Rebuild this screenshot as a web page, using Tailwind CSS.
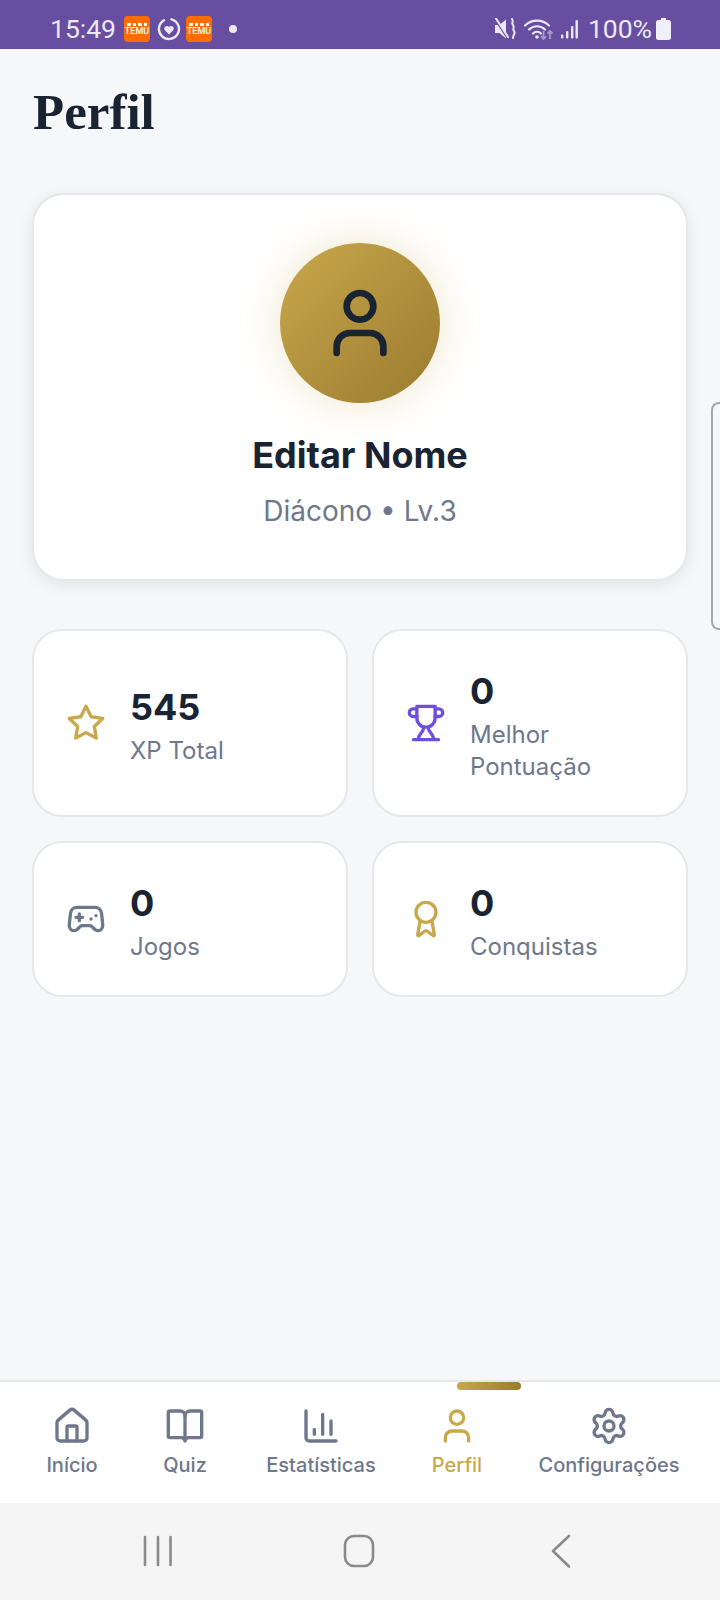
<!DOCTYPE html>
<html lang="pt-BR">
<head>
  <meta charset="UTF-8" />
  <meta name="viewport" content="width=device-width, initial-scale=1.0" />
  <title>Perfil</title>
  <script src="https://cdn.jsdelivr.net/npm/@tailwindcss/browser@4"></script>
</head>
<body class="relative w-[720px] h-[1600px] overflow-hidden flex flex-col bg-[#f6f7f9] font-['Inter',sans-serif]">

  <!-- status bar -->
  <div class="h-[49px] shrink-0 bg-[#674ea0] pt-[9px] flex items-center text-[#ece9f6] font-['Roboto',sans-serif]">
    <span class="ml-[50px] w-[74px] text-[26.5px] leading-none">15:49</span>
    <div class="w-[26px] h-[26px] rounded-[4px] bg-[#ff6d00] flex flex-col items-center justify-center">
      <div class="flex gap-[2px] mb-[1px]"><i class="w-[3.500px] h-[3px] bg-white"></i><i class="w-[3.500px] h-[3px] bg-white"></i><i class="w-[3.500px] h-[3px] bg-white"></i><i class="w-[3.500px] h-[3px] bg-white"></i></div>
      <span class="text-[9px] leading-[9px] text-white font-medium">TEMU</span>
    </div>
    <svg class="ml-[7px]" width="24" height="24" viewBox="0 0 24 24" fill="none">
      <path d="M14.500 2.300a10 10 0 1 1-7.500 1" stroke="#ece9f6" stroke-width="2.400" stroke-linecap="round"/>
      <path d="M12 17.500l-4.400-4.400a2.700 2.700 0 0 1 4.400-3.100 2.700 2.700 0 0 1 4.400 3.100z" fill="#ece9f6"/>
    </svg>
    <div class="ml-[5px] w-[26px] h-[26px] rounded-[4px] bg-[#ff6d00] flex flex-col items-center justify-center">
      <div class="flex gap-[2px] mb-[1px]"><i class="w-[3.500px] h-[3px] bg-white"></i><i class="w-[3.500px] h-[3px] bg-white"></i><i class="w-[3.500px] h-[3px] bg-white"></i><i class="w-[3.500px] h-[3px] bg-white"></i></div>
      <span class="text-[9px] leading-[9px] text-white font-medium">TEMU</span>
    </div>
    <div class="ml-[17px] w-[8px] h-[8px] rounded-full bg-[#ece9f6]"></div>

    <svg class="ml-auto" width="21" height="22" viewBox="0 0 21 22" fill="none">
      <path d="M0 7h4.500L11 1.500V20.500L4.500 15H0z" fill="#ece9f6"/>
      <path d="M0 1l13 20" stroke="#674ea0" stroke-width="2"/>
      <path d="M1 0.500l12 18.500" stroke="#ece9f6" stroke-width="2" stroke-linecap="round"/>
      <path d="M17 1c2 2.500-1 3.500 1 6s-1 3.500 1 6-1 3.500-1 7" stroke="#ece9f6" stroke-width="2" stroke-linecap="round"/>
    </svg>
    <svg class="ml-[8px]" width="30" height="24" viewBox="0 0 30 24" fill="none">
      <path d="M1 8.500a17 17 0 0 1 24 0M5 12.500a11.500 11.500 0 0 1 16 0M9 16.500a5.500 5.500 0 0 1 8 0" stroke="#ece9f6" stroke-width="2.200" stroke-linecap="round"/>
      <circle cx="13" cy="20" r="1.800" fill="#ece9f6"/>
      <path d="M19.500 14v8m-2.500-2.500l2.500 2.500 2.500-2.500" stroke="#a897cf" stroke-width="1.800"/>
      <path d="M26 22v-8m-2.500 2.500L26 14l2.500 2.500" stroke="#a897cf" stroke-width="1.800"/>
    </svg>
    <svg class="ml-[6px]" width="18" height="22" viewBox="0 0 18 22" fill="#ece9f6">
      <rect x="1" y="16.500" width="2.400" height="4" rx="1"/>
      <rect x="6" y="13" width="2.400" height="7.500" rx="1"/>
      <rect x="11" y="8" width="2.400" height="12.500" rx="1"/>
      <rect x="15.500" y="2" width="2.400" height="18.500" rx="1"/>
    </svg>
    <span class="ml-[10px] text-[26.5px] leading-none">100%</span>
    <svg class="ml-[4px] mr-[49px]" width="15" height="22" viewBox="0 0 15 22" fill="#f1eff8">
      <path d="M5 0h5v2h2.500A2.500 2.500 0 0 1 15 4.500V19.500A2.500 2.500 0 0 1 12.500 22h-10A2.500 2.500 0 0 1 0 19.500V4.500A2.500 2.500 0 0 1 2.500 2H5z"/>
    </svg>
  </div>

  <!-- content -->
  <main class="flex-1 px-[32px]">
    <h1 class="mt-[32px] ml-[1px] h-[62px] text-[51px] leading-[62px] font-bold text-[#1a2332] font-['Liberation_Serif',serif]">Perfil</h1>

    <section class="mt-[50px] h-[388px] bg-white border-2 border-[#e5e7eb] rounded-[32px] shadow-[0_4px_16px_rgba(0,0,0,0.08)] flex flex-col items-center pt-[48px]">
      <div class="w-[160px] h-[160px] rounded-full bg-gradient-to-br from-[#c9a84c] to-[#9a7b2f] shadow-[0_0_40px_rgba(201,168,76,0.3)] flex items-center justify-center">
        <svg width="80" height="80" viewBox="0 0 24 24" fill="none" stroke="#1a2332" stroke-width="2" stroke-linecap="round" stroke-linejoin="round">
          <path d="M19 21v-2a4 4 0 0 0-4-4H9a4 4 0 0 0-4 4v2"/><circle cx="12" cy="7" r="4"/>
        </svg>
      </div>
      <h2 class="mt-[28px] text-[36px] leading-[48px] font-bold text-[#1a2332]">Editar Nome</h2>
      <p class="mt-[11px] text-[28px] leading-[42px] text-[#6e778c]">Diácono • Lv.3</p>
    </section>

    <section class="mt-[48px] grid grid-cols-2 gap-[24px]">
      <div class="bg-white border-2 border-[#e5e7eb] rounded-[30px] flex items-center gap-[24px] px-[32px] py-[32.500px]">
        <svg class="shrink-0" width="40" height="40" viewBox="0 0 24 24" fill="none" stroke="#c9a84c" stroke-width="2" stroke-linecap="round" stroke-linejoin="round">
          <path d="M12 2l3.090 6.260L22 9.270l-5 4.870 1.180 6.880L12 17.770l-6.180 3.250L7 14.140 2 9.270l6.910-1.010L12 2z"/>
        </svg>
        <div>
          <div class="text-[36px] leading-[55px] font-bold text-[#1a2332]">545</div>
          <div class="text-[24px] leading-[32px] text-[#6e778c]">XP Total</div>
        </div>
      </div>
      <div class="bg-white border-2 border-[#e5e7eb] rounded-[30px] flex items-center gap-[24px] px-[32px] py-[32.500px]">
        <svg class="shrink-0" width="40" height="40" viewBox="0 0 24 24" fill="none" stroke="#6f4fe0" stroke-width="2" stroke-linecap="round" stroke-linejoin="round">
          <path d="M6.500 2h11v7a5.500 5.500 0 0 1-11 0z"/>
          <path d="M6.500 3.500H4.300a2.300 2.300 0 0 0 0 4.600h2.400M17.500 3.500h2.200a2.300 2.300 0 0 1 0 4.600h-2.400"/>
          <path d="M10.500 14.500v1c0 1.500-2.500 3-3 5.500M13.500 14.500v1c0 1.500 2.500 3 3 5.500"/>
          <path d="M4.500 22h15"/>
        </svg>
        <div>
          <div class="text-[36px] leading-[55px] font-bold text-[#1a2332]">0</div>
          <div class="text-[24px] leading-[32px] text-[#6e778c]">Melhor Pontuação</div>
        </div>
      </div>
      <div class="bg-white border-2 border-[#e5e7eb] rounded-[30px] flex items-center gap-[24px] px-[32px] py-[32.500px]">
        <svg class="shrink-0" width="40" height="40" viewBox="0 0 24 24" fill="none" stroke="#6e778c" stroke-width="2" stroke-linecap="round" stroke-linejoin="round">
          <path d="M6 11h4M8 9v4M15 12h.010M18 10h.010"/>
          <path d="M17.320 5H6.680a4 4 0 0 0-3.978 3.590c-.006.052-.010.101-.017.152C2.604 9.416 2 14.456 2 16a3 3 0 0 0 3 3c1 0 1.500-.5 2-1l1.414-1.414A2 2 0 0 1 9.828 16h4.344a2 2 0 0 1 1.414.586L17 18c.5.5 1 1 2 1a3 3 0 0 0 3-3c0-1.545-.604-6.584-.685-7.258-.007-.05-.011-.1-.017-.151A4 4 0 0 0 17.320 5z"/>
        </svg>
        <div>
          <div class="text-[36px] leading-[55px] font-bold text-[#1a2332]">0</div>
          <div class="text-[24px] leading-[32px] text-[#6e778c]">Jogos</div>
        </div>
      </div>
      <div class="bg-white border-2 border-[#e5e7eb] rounded-[30px] flex items-center gap-[24px] px-[32px] py-[32.500px]">
        <svg class="shrink-0" width="40" height="40" viewBox="0 0 24 24" fill="none" stroke="#c9a84c" stroke-width="2" stroke-linecap="round" stroke-linejoin="round">
          <path d="M15.477 12.890l1.515 8.526a.5.5 0 0 1-.81.470l-3.580-2.687a1 1 0 0 0-1.197 0l-3.586 2.686a.5.5 0 0 1-.81-.469l1.514-8.526"/>
          <circle cx="12" cy="8" r="6"/>
        </svg>
        <div>
          <div class="text-[36px] leading-[55px] font-bold text-[#1a2332]">0</div>
          <div class="text-[24px] leading-[32px] text-[#6e778c]">Conquistas</div>
        </div>
      </div>
    </section>
  </main>

  <!-- edge panel handle -->
  <div class="absolute right-0 top-[402px] w-[9px] h-[228px] border-2 border-r-0 border-[#a8a8a8] rounded-l-[8px]"></div>

  <!-- tab bar -->
  <nav class="relative shrink-0 h-[123px] bg-white border-t-2 border-[#e5e7eb] px-[22px] pt-[24px] grid grid-cols-[100px_126px_146px_126px_178px] text-[20px] leading-[30px] font-medium text-[#6e778c]">
    <div class="absolute left-[457px] top-0 w-[64px] h-[8px] rounded-full bg-gradient-to-r from-[#c9a84c] to-[#9a7b2f]"></div>
    <div class="flex flex-col items-center gap-[4px]">
      <svg width="40" height="40" viewBox="0 0 24 24" fill="none" stroke="currentColor" stroke-width="2" stroke-linecap="round" stroke-linejoin="round">
        <path d="M15 21v-8a1 1 0 0 0-1-1h-4a1 1 0 0 0-1 1v8"/>
        <path d="M3 10a2 2 0 0 1 .709-1.528l7-5.999a2 2 0 0 1 2.582 0l7 5.999A2 2 0 0 1 21 10v9a2 2 0 0 1-2 2H5a2 2 0 0 1-2-2z"/>
      </svg>
      <span>Início</span>
    </div>
    <div class="flex flex-col items-center gap-[4px]">
      <svg width="40" height="40" viewBox="0 0 24 24" fill="none" stroke="currentColor" stroke-width="2" stroke-linecap="round" stroke-linejoin="round">
        <path d="M12 6v15"/>
        <path d="M3 19a1 1 0 0 1-1-1V4a1 1 0 0 1 1-1h6a3 3 0 0 1 3 3 3 3 0 0 1 3-3h6a1 1 0 0 1 1 1v14a1 1 0 0 1-1 1h-7.500l-1.500 1.500-1.500-1.500z"/>
      </svg>
      <span>Quiz</span>
    </div>
    <div class="flex flex-col items-center gap-[4px]">
      <svg width="40" height="40" viewBox="0 0 24 24" fill="none" stroke="currentColor" stroke-width="2" stroke-linecap="round" stroke-linejoin="round">
        <path d="M3 3v16a2 2 0 0 0 2 2h16"/><path d="M18 17V9"/><path d="M13 17V5"/><path d="M8 17v-3"/>
      </svg>
      <span>Estatísticas</span>
    </div>
    <div class="flex flex-col items-center gap-[4px] text-[#c9a84c]">
      <svg width="40" height="40" viewBox="0 0 24 24" fill="none" stroke="currentColor" stroke-width="2" stroke-linecap="round" stroke-linejoin="round">
        <path d="M19 21v-2a4 4 0 0 0-4-4H9a4 4 0 0 0-4 4v2"/><circle cx="12" cy="7" r="4"/>
      </svg>
      <span>Perfil</span>
    </div>
    <div class="flex flex-col items-center gap-[4px]">
      <svg width="40" height="40" viewBox="0 0 24 24" fill="none" stroke="currentColor" stroke-width="2" stroke-linecap="round" stroke-linejoin="round">
        <path d="M9.671 4.136a2.340 2.340 0 0 1 4.659 0 2.340 2.340 0 0 0 3.319 1.915 2.340 2.340 0 0 1 2.330 4.033 2.340 2.340 0 0 0 0 3.831 2.340 2.340 0 0 1-2.330 4.033 2.340 2.340 0 0 0-3.319 1.915 2.340 2.340 0 0 1-4.659 0 2.340 2.340 0 0 0-3.320-1.915 2.340 2.340 0 0 1-2.330-4.033 2.340 2.340 0 0 0 0-3.831A2.340 2.340 0 0 1 6.350 6.051a2.340 2.340 0 0 0 3.320-1.915"/>
        <circle cx="12" cy="12" r="3"/>
      </svg>
      <span>Configurações</span>
    </div>
  </nav>

  <!-- android nav -->
  <div class="shrink-0 h-[97px] bg-[#f5f5f5] flex items-center justify-center relative">
    <svg width="720" height="97" viewBox="0 0 720 97" fill="none" stroke="#8a8a8a" stroke-width="2.600" stroke-linecap="round" stroke-linejoin="round">
      <path d="M145 34v28M158 34v28M170.500 34v28"/>
      <rect x="345" y="33" width="28" height="30" rx="9"/>
      <path d="M569 33L553 48l16 15.500"/>
    </svg>
  </div>
</body>
</html>
